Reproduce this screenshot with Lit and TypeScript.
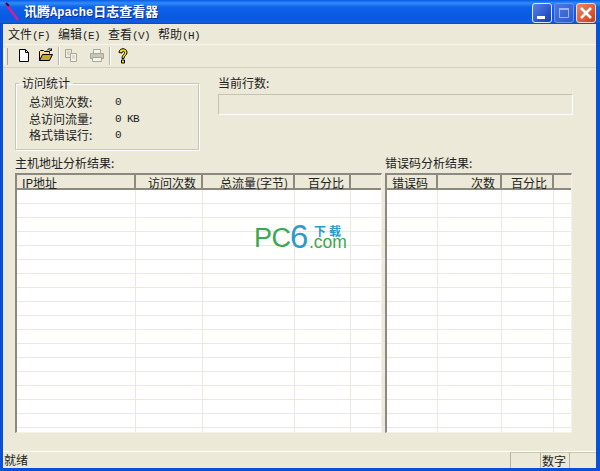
import { LitElement, html, css, svg, unsafeCSS } from 'lit';
import { customElement } from 'lit/decorators.js';

const CJK = unsafeCSS(`"Noto Sans CJK SC", "Liberation Sans", sans-serif`);

const menus = [
  ['文件', 'F'],
  ['编辑', 'E'],
  ['查看', 'V'],
  ['帮助', 'H'],
];

const stats = [
  ['总浏览次数:', '0'],
  ['总访问流量:', '0 KB'],
  ['格式错误行:', '0'],
];

type Col = { label: string; width: number; left?: boolean };

const hostCols: Col[] = [
  { label: 'IP地址', width: 119, left: true },
  { label: '访问次数', width: 67 },
  { label: '总流量(字节)', width: 92 },
  { label: '百分比', width: 56 },
  { label: '', width: 31 },
];

const errorCols: Col[] = [
  { label: '错误码', width: 51, left: true },
  { label: '次数', width: 64 },
  { label: '百分比', width: 52 },
  { label: '', width: 18 },
];

const newIcon = svg`<path d="M3.5 1.5h6l3 3v9h-9z" fill="#fff" stroke="#000"/><path d="M9.5 1.5v3h3" fill="none" stroke="#000"/>`;
const openIcon = svg`<path d="M1.5 12.5v-9l1-1h3l1 1h5v2" fill="#f4e08a" stroke="#000"/><path d="M1.5 12.5l3-6h10l-3 6z" fill="#c8a828" stroke="#000"/><path d="M9 2.5c1-2 3-2 4.5-1M13.5 .5v2h-2" fill="none" stroke="#000"/>`;
const copyIcon = svg`<path d="M1.5 1.5h6v8h-6z" fill="#ece9d8" stroke="#a8a698"/><path d="M6.5 5.5h6v8h-6z" fill="#f6f4ea" stroke="#a8a698"/><path d="M3 4h3M3 6h3M8 8h3M8 10h3" stroke="#c4c2b4"/>`;
const printIcon = svg`<path d="M4.5 1.5h7v4h-7z" fill="#f6f4ea" stroke="#a8a698"/><path d="M1.5 5.5h13v5h-13z" fill="#c8c6b8" stroke="#a8a698"/><path d="M3.5 9.5h9v4h-9z" fill="#f6f4ea" stroke="#a8a698"/>`;
const helpIcon = svg`<path d="M4 4.5c0-5 8-5 8 0 0 3-3 3-3 6H7c0-4 2.5-3.5 2.5-6 0-1.500-2.500-1.500-2.500 .5z" fill="#f5e020" stroke="#000"/><path d="M6.5 12h3v3h-3z" fill="#f5e020" stroke="#000"/>`;

@customElement('app-root')
export class AppRoot extends LitElement {
  static styles = css`
    :host {
      display: flex;
      flex-direction: column;
      width: 600px;
      height: 471px;
      overflow: hidden;
      background: #0a4fd8;
      font: 12px/14px ${CJK};
      color: #222;
    }

    .latin {
      font-family: "Liberation Mono", monospace;
      font-size: 11px;
      letter-spacing: -0.6px;
    }

    .titlebar {
      display: flex;
      align-items: center;
      height: 24px;
      flex-shrink: 0;
      padding: 0 4px 0 3px;
      background: linear-gradient(#0a5ae6 0, #2f8cf8 3px, #0f62ea 7px, #0a58e2 18px, #0f5fe0 22px, #0a48c0 24px);
    }
    .title-icon {
      width: 20px;
      height: 22px;
      flex-shrink: 0;
    }
    .title-text {
      margin-left: 1px;
      color: #fff;
      font-size: 13px;
      font-weight: 700;
      text-shadow: 1px 1px 0 #0a2f90;
    }
    .title-text .latin {
      font-size: 12px;
      letter-spacing: 0;
    }
    .caps {
      display: flex;
      gap: 2px;
      margin: 2px 0 0 auto;
    }
    .cap {
      width: 20px;
      height: 20px;
      box-sizing: border-box;
      border: 1px solid #dfe8ff;
      border-radius: 3px;
      background: linear-gradient(135deg, #5a84e8, #2350c8 70%, #1c3fb0);
    }
    .cap.off {
      border-color: #6f93e8;
      background: linear-gradient(135deg, #4a78e0, #2f5ad0);
    }
    .cap.close {
      border-color: #f0d8d0;
      background: linear-gradient(135deg, #eb8a66, #d8522c 70%, #c03c18);
    }
    .cap svg {
      display: block;
      width: 18px;
      height: 18px;
    }

    .window {
      display: flex;
      flex-direction: column;
      flex: 1;
      min-height: 0;
      margin: 0 4px 3px 3px;
      background: #ece9d8;
    }

    .menubar {
      display: flex;
      height: 20px;
      box-sizing: border-box;
      flex-shrink: 0;
      padding: 2px 0 0 1px;
      align-items: center;
    }
    .menu {
      width: 50px;
      box-sizing: border-box;
      padding-left: 4px;
      white-space: nowrap;
    }

    .toolbar {
      display: flex;
      align-items: center;
      height: 22px;
      flex-shrink: 0;
      border-top: 1px solid #f8f6ec;
      border-bottom: 1px solid #d4d0c0;
    }
    .grip {
      width: 2px;
      height: 17px;
      margin: 0 5px 0 1px;
      border-left: 1px solid #fff;
      border-right: 1px solid #a8a698;
    }
    .tool {
      display: flex;
      justify-content: center;
      width: 22px;
    }
    .tool svg {
      display: block;
      width: 16px;
      height: 16px;
    }
    .tool.spaced {
      margin-left: 3px;
    }
    .sep {
      width: 2px;
      height: 18px;
      margin: 0 1px;
      border-left: 1px solid #b8b6a8;
      border-right: 1px solid #fff;
      box-sizing: border-box;
    }

    .content {
      position: relative;
      display: flex;
      flex-direction: column;
      flex: 1;
      min-height: 0;
      padding: 8px 23px 0 12px;
    }

    .top {
      display: flex;
      gap: 19px;
      height: 74px;
      flex-shrink: 0;
    }
    fieldset {
      width: 184px;
      height: 74px;
      box-sizing: border-box;
      margin: 0;
      padding: 4px 0 0 13px;
      border: 1px solid #c8c6b4;
      box-shadow: inset 1px 1px 0 #fff, 1px 1px 0 #fff;
    }
    legend {
      margin-left: -10px;
      padding: 0 3px;
      line-height: 14px;
    }
    .stat {
      display: flex;
      height: 16.5px;
      align-items: center;
      white-space: nowrap;
    }
    .stat .name {
      width: 86px;
    }
    .progress {
      flex: 1;
    }
    .progress-box {
      height: 21px;
      margin-top: 4px;
      box-sizing: border-box;
      border: 1px solid #c4c2b0;
      border-right-color: #fff;
      border-bottom-color: #fff;
      background: #ece9d8;
    }

    .tables {
      display: flex;
      gap: 3px;
      flex: 1;
      min-height: 0;
      margin-top: 6px;
    }
    .pane {
      display: flex;
      flex-direction: column;
    }
    .pane-title {
      height: 14px;
      margin-bottom: 3px;
      white-space: nowrap;
    }

    .list {
      height: 260px;
      overflow: hidden;
      box-sizing: border-box;
      border: 2px solid #8c8a80;
      border-right: 1px solid #f4f2e8;
      border-bottom: 1px solid #f4f2e8;
      background: #fff;
    }
    .row {
      display: flex;
      height: 14px;
      box-sizing: border-box;
      border-bottom: 1px solid #ece9d8;
    }
    .row.head {
      height: 15px;
      border-bottom: 2px solid #8c8a80;
      background: #ece9d8;
    }
    .cell {
      flex-shrink: 0;
      box-sizing: border-box;
      border-right: 1px solid #ece9d8;
    }
    .head .cell {
      padding-right: 5px;
      border-right: 2px solid #8c8a80;
      text-align: right;
      white-space: nowrap;
      line-height: 15px;
    }
    .head .cell.left {
      padding-left: 5px;
      text-align: left;
    }
    .head .cell:last-child {
      border-right: none;
    }

    .watermark {
      position: absolute;
      left: 251px;
      top: 153px;
      width: 100px;
      height: 30px;
      font-family: "Liberation Sans", sans-serif;
    }
    .wm-pc {
      position: absolute;
      left: 0;
      top: 2px;
      color: #3aa850;
      font-size: 27px;
      line-height: 30px;
      letter-spacing: -0.5px;
    }
    .wm-six {
      position: absolute;
      left: 36px;
      top: 0;
      color: #2d9ac8;
      font-size: 33px;
      line-height: 31px;
    }
    .wm-dl {
      position: absolute;
      left: 60px;
      top: 5px;
      color: #2d9ac8;
      font: 700 12px/10px ${CJK};
      letter-spacing: 3px;
    }
    .wm-com {
      position: absolute;
      left: 55px;
      top: 15px;
      color: #3aa850;
      font-size: 17.5px;
      line-height: 12px;
    }

    .status {
      display: flex;
      height: 17px;
      flex-shrink: 0;
      box-sizing: border-box;
      border-top: 1px solid #fff;
      padding-left: 1px;
      align-items: stretch;
    }
    .status-text {
      flex: 1;
      line-height: 15px;
    }
    .panel {
      width: 29px;
      box-sizing: border-box;
      padding-left: 1px;
      line-height: 15px;
      border-left: 1px solid #b4b2a2;
      border-top: 1px solid #c8c6b4;
    }
    .panel.wide {
      width: 30px;
    }
    .panel.end {
      width: 27px;
    }
  `;

  private renderList(cols: Col[], width: number) {
    return html`
      <div class="list" style="width: ${width}px">
        <div class="row head">
          ${cols.map(
            (c) => html`<div class="cell ${c.left ? 'left' : ''}" style="width: ${c.width}px">${c.label}</div>`
          )}
        </div>
        ${Array.from(
          { length: 18 },
          () => html`
            <div class="row">
              ${cols.map((c) => html`<div class="cell" style="width: ${c.width}px"></div>`)}
            </div>
          `
        )}
      </div>
    `;
  }

  render() {
    return html`
      <div class="titlebar">
        <svg class="title-icon" viewBox="0 0 20 22">
          <path d="M3 3l12 16" stroke="#d0209a" stroke-width="2.5" fill="none" />
          <path d="M3 2l3 3" stroke="#301040" stroke-width="2" fill="none" />
        </svg>
        <span class="title-text">讯腾<span class="latin">Apache</span>日志查看器</span>
        <div class="caps">
          <div class="cap">
            <svg viewBox="0 0 18 18"><path d="M4 12h8v3H4z" fill="#fff" /></svg>
          </div>
          <div class="cap off">
            <svg viewBox="0 0 18 18">
              <path d="M4.5 4.5h9v9h-9z" fill="none" stroke="#9ab4ee" />
              <path d="M4 4h10v2H4z" fill="#9ab4ee" />
            </svg>
          </div>
          <div class="cap close">
            <svg viewBox="0 0 18 18"><path d="M4 4l10 10M14 4L4 14" stroke="#fff" stroke-width="2.5" /></svg>
          </div>
        </div>
      </div>
      <div class="window">
        <div class="menubar">
          ${menus.map(([name, key]) => html`<div class="menu">${name}<span class="latin">(${key})</span></div>`)}
        </div>
        <div class="toolbar">
          <div class="grip"></div>
          <div class="tool"><svg viewBox="0 0 16 16">${newIcon}</svg></div>
          <div class="tool"><svg viewBox="0 0 16 16">${openIcon}</svg></div>
          <div class="sep"></div>
          <div class="tool"><svg viewBox="0 0 16 16">${copyIcon}</svg></div>
          <div class="tool spaced"><svg viewBox="0 0 16 16">${printIcon}</svg></div>
          <div class="sep"></div>
          <div class="tool"><svg viewBox="0 0 16 16">${helpIcon}</svg></div>
        </div>
        <div class="content">
          <div class="top">
            <fieldset>
              <legend>访问统计</legend>
              ${stats.map(
                ([name, value]) => html`
                  <div class="stat">
                    <span class="name">${name}</span><span class="latin">${value}</span>
                  </div>
                `
              )}
            </fieldset>
            <div class="progress">
              <div>当前行数:</div>
              <div class="progress-box"></div>
            </div>
          </div>
          <div class="tables">
            <div class="pane">
              <div class="pane-title">主机地址分析结果:</div>
              ${this.renderList(hostCols, 367)}
            </div>
            <div class="pane">
              <div class="pane-title">错误码分析结果:</div>
              ${this.renderList(errorCols, 187)}
            </div>
          </div>
          <div class="watermark">
            <span class="wm-pc">PC</span>
            <span class="wm-six">6</span>
            <span class="wm-dl">下载</span>
            <span class="wm-com">.com</span>
          </div>
        </div>
        <div class="status">
          <div class="status-text">就绪</div>
          <div class="panel wide"></div>
          <div class="panel">数字</div>
          <div class="panel end"></div>
        </div>
      </div>
    `;
  }
}
